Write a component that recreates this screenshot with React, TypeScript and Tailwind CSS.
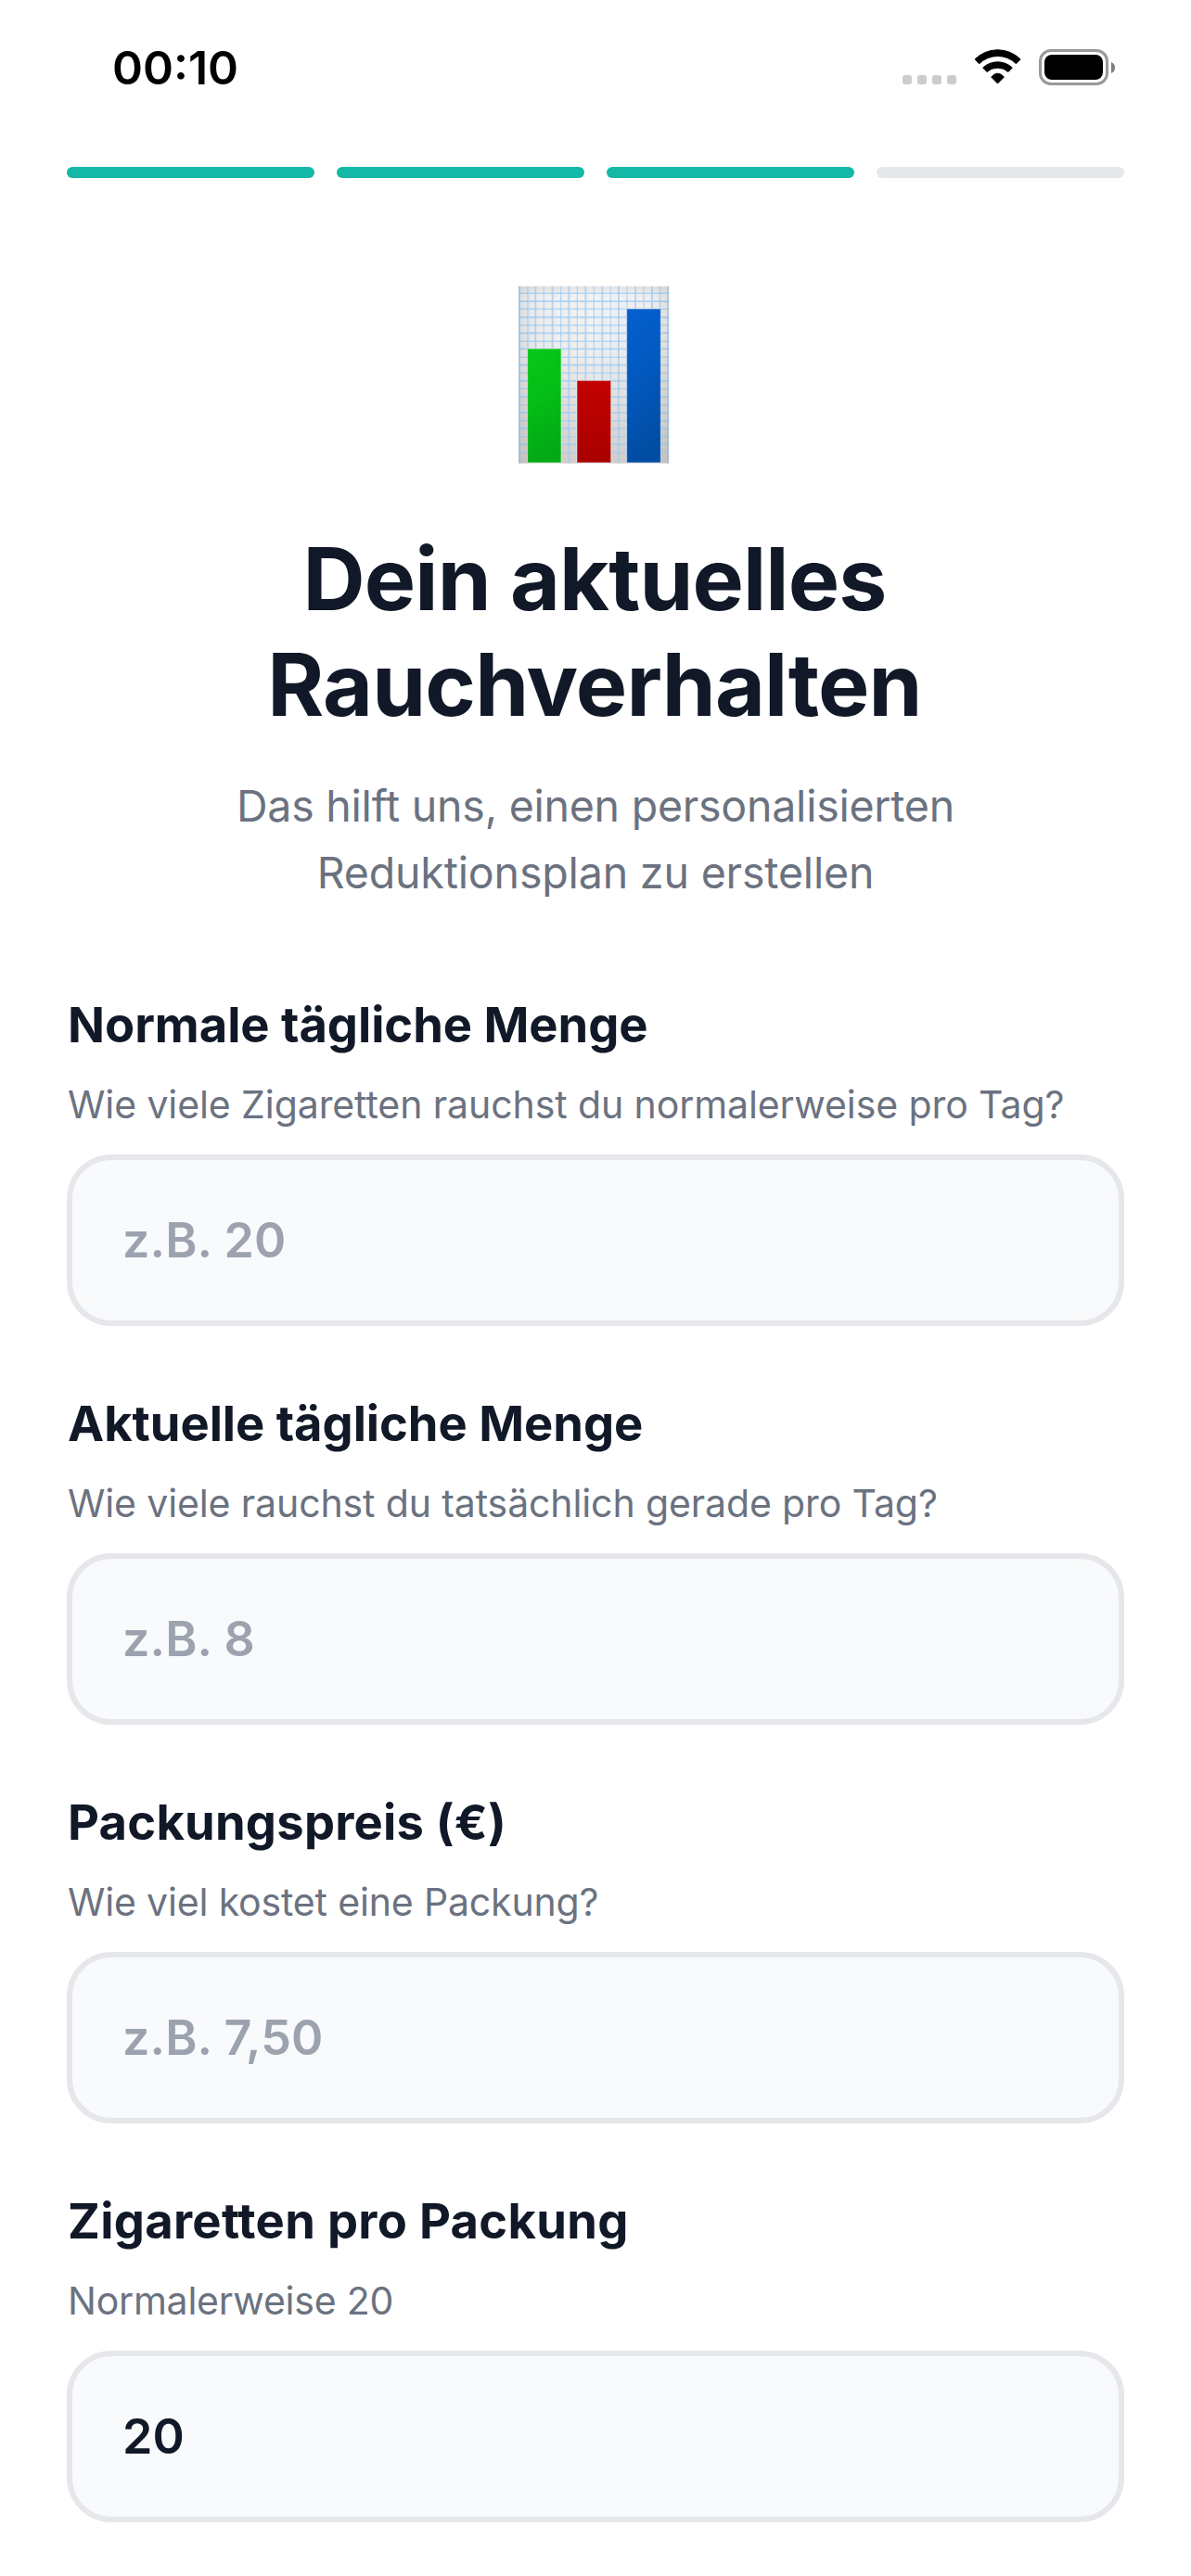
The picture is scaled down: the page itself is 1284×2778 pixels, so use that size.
type Field = {
  id: string;
  label: string;
  hint: string;
  placeholder?: string;
  value?: string;
  labelTracking: string;
  hintTracking: string;
};

const fields: Field[] = [
  {
    id: "normal",
    label: "Normale tägliche Menge",
    hint: "Wie viele Zigaretten rauchst du normalerweise pro Tag?",
    placeholder: "z.B. 20",
    labelTracking: "tracking-[-0.04px]",
    hintTracking: "tracking-[-0.09px]",
  },
  {
    id: "aktuell",
    label: "Aktuelle tägliche Menge",
    hint: "Wie viele rauchst du tatsächlich gerade pro Tag?",
    placeholder: "z.B. 8",
    labelTracking: "tracking-[-0.04px]",
    hintTracking: "tracking-[-0.12px]",
  },
  {
    id: "preis",
    label: "Packungspreis (€)",
    hint: "Wie viel kostet eine Packung?",
    placeholder: "z.B. 7,50",
    labelTracking: "tracking-[0.22px]",
    hintTracking: "tracking-[-0.16px]",
  },
  {
    id: "packung",
    label: "Zigaretten pro Packung",
    hint: "Normalerweise 20",
    value: "20",
    labelTracking: "tracking-[0.3px]",
    hintTracking: "tracking-[-0.22px]",
  },
];

const gridColumns = [60, 87, 112, 139, 167, 194, 220, 247, 274, 301, 328, 355, 381, 408, 435, 462, 489, 515, 541];
const gridRows = [79, 105, 130, 157, 182, 208, 235, 259, 286, 311, 337, 362, 388, 414, 440, 465, 491, 517, 543, 568, 595];

function ChartIcon() {
  return (
    <svg viewBox="54 54 492 576" className="h-[192px] w-[164px]" aria-hidden="true">
      <defs>
        <linearGradient id="paper" x1="0" y1="0" x2="0" y2="1">
          <stop offset="0" stopColor="#e6e6e6" />
          <stop offset="0.06" stopColor="#f3f3f3" />
          <stop offset="0.35" stopColor="#f0efef" />
          <stop offset="1" stopColor="#d3cfcc" />
        </linearGradient>
        <linearGradient id="edges" x1="0" y1="0" x2="1" y2="0">
          <stop offset="0" stopColor="#000" stopOpacity="0.08" />
          <stop offset="0.12" stopColor="#000" stopOpacity="0.02" />
          <stop offset="0.5" stopColor="#000" stopOpacity="0" />
          <stop offset="0.88" stopColor="#000" stopOpacity="0.02" />
          <stop offset="1" stopColor="#000" stopOpacity="0.08" />
        </linearGradient>
        <linearGradient id="green" x1="0" y1="0" x2="0.15" y2="1">
          <stop offset="0" stopColor="#06c718" />
          <stop offset="0.5" stopColor="#04bd16" />
          <stop offset="1" stopColor="#02a915" />
        </linearGradient>
        <linearGradient id="red" x1="0" y1="0" x2="0" y2="1">
          <stop offset="0" stopColor="#c20200" />
          <stop offset="1" stopColor="#a80100" />
        </linearGradient>
        <linearGradient id="blue" x1="0" y1="0" x2="0.2" y2="1">
          <stop offset="0" stopColor="#0560cf" />
          <stop offset="0.5" stopColor="#0258bf" />
          <stop offset="1" stopColor="#014da4" />
        </linearGradient>
      </defs>
      <rect x="57" y="56" width="486" height="573" fill="url(#paper)" />
      <g stroke="#a4cff3" strokeOpacity="0.75">
        {gridColumns.map((x, i) => (
          <line key={x} x1={x} x2={x} y1="56" y2="629" strokeWidth={i % 2 === 0 ? 6 : 4} />
        ))}
        {gridRows.map((y, i) => (
          <line key={y} x1="57" x2="543" y1={y} y2={y} strokeWidth={i % 2 === 1 ? 6 : 4.5} />
        ))}
      </g>
      <rect x="57" y="56" width="486" height="573" fill="url(#edges)" />
      <g stroke="#ffffff" strokeOpacity="0.5" strokeWidth="3">
        <rect x="86" y="258" width="109" height="369" fill="url(#green)" />
        <rect x="246" y="361" width="110" height="266" fill="url(#red)" />
        <rect x="407" y="129" width="110" height="498" fill="url(#blue)" />
      </g>
    </svg>
  );
}

function WifiIcon() {
  return (
    <svg viewBox="30 41 153 114" className="ml-[19px] h-[38px] w-[51px]" aria-hidden="true">
      <g fill="#000" stroke="#000" strokeWidth="3" strokeLinejoin="round">
        <path d="M33 74 A104 104 0 0 1 180.500 74 L166.500 88 A85 85 0 0 0 47 88 Z" />
        <path d="M59 101 A70 70 0 0 1 154 101 L141 114.500 A52 52 0 0 0 72 114.500 Z" />
        <path d="M86 131 Q106.500 108 127.500 131 L106.500 152 Z" />
      </g>
    </svg>
  );
}

function BatteryIcon() {
  return (
    <div className="ml-[19px] flex items-center">
      <div className="h-[39px] w-[75px] rounded-[13px] border-3 border-[#999999] p-[3px]">
        <div className="h-full rounded-[8px] bg-black" />
      </div>
      <svg viewBox="0 0 4 12" className="ml-[3px] h-[12px] w-[4px]" aria-hidden="true">
        <path d="M0 0 Q4 1.500 4 6 T0 12 Z" fill="#808080" />
      </svg>
    </div>
  );
}

function StatusBar() {
  return (
    <header className="flex h-[180px] items-start justify-between pt-[53px] pr-[82px] pl-[121px]">
      <span className="mt-[-10px] text-[50px] leading-[60px] font-semibold text-black">00:10</span>
      <div className="flex items-start">
        <div className="mt-[28px] flex gap-[6px]">
          {[0, 1, 2, 3].map((dot) => (
            <span key={dot} className="size-[10px] rounded-[3px] bg-[#cccccc]" />
          ))}
        </div>
        <WifiIcon />
        <BatteryIcon />
      </div>
    </header>
  );
}

export default function App() {
  return (
    <div className="h-[2778px] w-[1284px] overflow-hidden bg-white font-['Inter',sans-serif]">
      <StatusBar />
      <main className="flex flex-col px-[72px]">
        <div className="grid grid-cols-4 gap-6">
          {[true, true, true, false].map((done, i) => (
            <div key={i} className={done ? "h-3 rounded-[6px] bg-[#14b8a6]" : "h-3 rounded-[6px] bg-[#e5e7eb]"} />
          ))}
        </div>

        <div className="mt-[116px] flex justify-center pr-[4px]">
          <ChartIcon />
        </div>

        <h1 className="mt-[67px] pr-[2px] text-center text-[93px] leading-[114px] font-bold tracking-[-0.85px] text-[#111827]">
          Dein aktuelles
          <br />
          Rauchverhalten
        </h1>
        <p className="mt-[38px] text-center text-[46.5px] leading-[72px] text-[#6b7280]">
          <span className="tracking-[-0.24px]">Das hilft uns, einen personalisierten</span>
          <br />
          <span className="tracking-[-0.16px]">Reduktionsplan zu erstellen</span>
        </p>

        <form className="mt-[96px] flex flex-col gap-[73px]">
          {fields.map((f) => (
            <div key={f.id} className="flex flex-col">
              <label
                htmlFor={f.id}
                className={`pl-px text-[52.5px] leading-[64px] font-bold whitespace-nowrap text-[#111827] ${f.labelTracking}`}
              >
                {f.label}
              </label>
              <p className={`mt-[29px] pl-px text-[41px] leading-[50px] whitespace-nowrap text-[#6b7280] ${f.hintTracking}`}>
                {f.hint}
              </p>
              <input
                id={f.id}
                defaultValue={f.value}
                placeholder={f.placeholder}
                className="mt-[29px] h-[185px] w-full rounded-[48px] border-6 border-[#e5e7eb] bg-[#f9fafb] px-[54px] text-[52px] font-[570] tracking-[0.1px] text-[#111827] outline-none placeholder:text-[#9ca3af]"
              />
            </div>
          ))}
        </form>
      </main>
    </div>
  );
}
